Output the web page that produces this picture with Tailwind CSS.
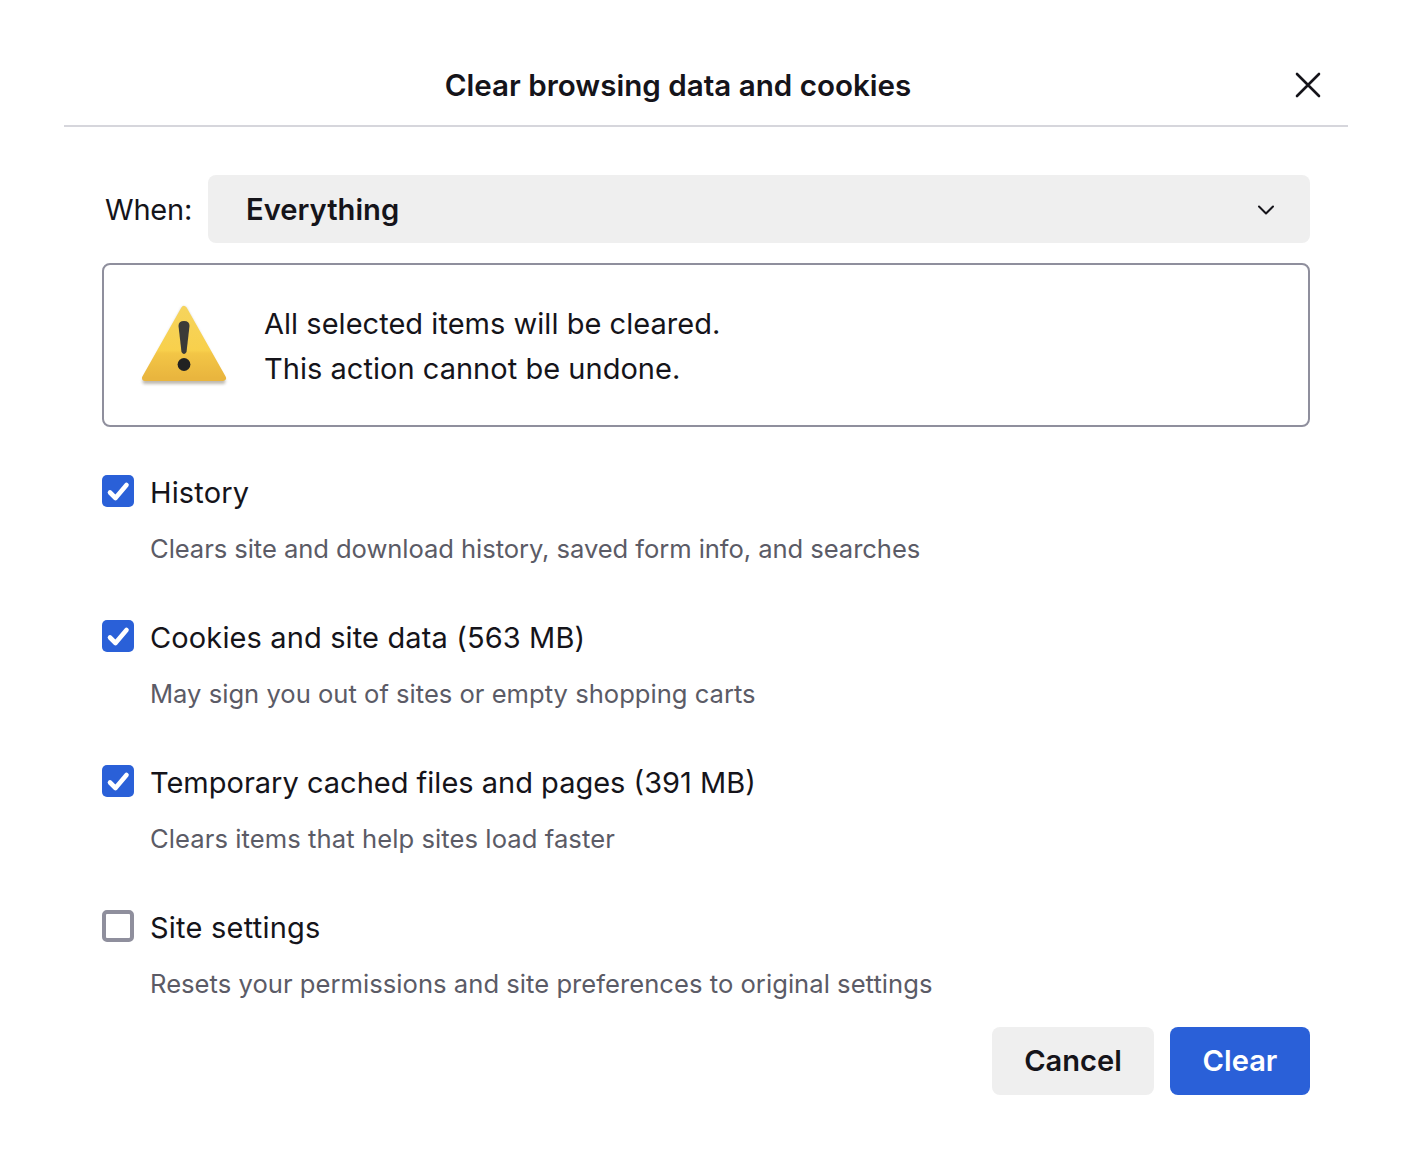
<!DOCTYPE html>
<html><head><meta charset="utf-8">
<script src="https://cdn.jsdelivr.net/npm/@tailwindcss/browser@4"></script>
</head>
<body class="bg-white font-['Inter',sans-serif] text-[#15141a]">
<div class="w-[1412px] h-[1175px] px-[64px] pt-[44px]">
  <header class="relative h-[83px] border-b-2 border-[#d6d6dc] flex items-start justify-center pr-[56px]">
    <h1 class="text-[29.6px] leading-[82px] h-[82px] font-semibold">Clear browsing data and cookies</h1>
    <svg class="absolute left-[1230px] top-[27px] w-[28px] h-[28px]" viewBox="0 0 28 28" fill="none" stroke="#15141a" stroke-width="2.6" stroke-linecap="round"><path d="M3 3 25 25M25 3 3 25"/></svg>
  </header>
  <main class="pl-[38px] pr-[38px]">
    <div class="flex items-center mt-[48px] h-[68px]">
      <span class="w-[106px] pl-[3px] pt-[2px] text-[29px] tracking-[-0.2px]">When:</span>
      <div class="flex-1 h-[68px] bg-[#efefef] rounded-[8px] flex items-center justify-between pl-[38px] pr-[35px]">
        <span class="pt-[2px] text-[29.2px] font-semibold">Everything</span>
        <svg class="w-[18px] h-[12px] mt-[2px]" viewBox="0 0 18 12" fill="none" stroke="#15141a" stroke-width="2" stroke-linecap="round" stroke-linejoin="round"><path d="M2 2.5 9 9.500 16 2.5"/></svg>
      </div>
    </div>
    <div class="mt-[20px] h-[164px] border-2 border-[#8f8f9d] rounded-[8px] flex items-center">
      <svg class="ml-[35px] w-[90px] h-[84px] shrink-0" viewBox="0 0 90 84">
        <defs>
          <linearGradient id="g" x1="0" y1="0" x2="0" y2="1"><stop offset="0" stop-color="#f6d45c"/><stop offset="0.6" stop-color="#f8d04c"/><stop offset="0.64" stop-color="#f3c646"/><stop offset="1" stop-color="#e9b53e"/></linearGradient>
          <filter id="b" x="-10%" y="-10%" width="120%" height="130%"><feGaussianBlur stdDeviation="1.4"/></filter>
          <filter id="s" x="-30%" y="-10%" width="160%" height="120%"><feGaussianBlur stdDeviation="0.6"/></filter>
        </defs>
        <path d="M6 77 H84 L45 5Z" fill="#8a8170" opacity=".55" stroke="#8a8170" stroke-width="5" stroke-linejoin="round" filter="url(#b)" transform="translate(0 1.500)"/>
        <path d="M6 75 45 6 84 75Z" fill="url(#g)" stroke="url(#g)" stroke-width="6" stroke-linejoin="round"/>
        <g filter="url(#s)">
          <path d="M39.500 23Q39.500 18 45 18T50.500 23L47.500 49Q45 53 42.500 49Z" fill="#3a3a38"/>
          <circle cx="45" cy="61.500" r="6.400" fill="#222"/>
        </g>
      </svg>
      <div class="ml-[35px] pt-[1px] text-[29px] leading-[45px] tracking-[0.03px]">
        <p>All selected items will be cleared.</p>
        <p>This action cannot be undone.</p>
      </div>
    </div>
    <ul class="mt-[48px] flex flex-col">
      <li class="h-[145px]">
        <div class="flex items-center h-[34px] gap-[16px]">
          <span class="w-[32px] h-[32px] mb-[2px] rounded-[5px] bg-[#2a60d8] flex items-center justify-center"><svg class="w-[24px] h-[24px]" viewBox="0 0 24 24" fill="none" stroke="#fff" stroke-width="4.600" stroke-linecap="round" stroke-linejoin="round"><path d="M4 13.500 9.500 19 20.500 6"/></svg></span>
          <span class="pt-[1px] text-[29px] tracking-[0.14px]">History</span>
        </div>
        <p class="ml-[48px] mt-[22px] text-[25.6px] leading-[36px] text-[#5b5b66] tracking-[-0.07px]">Clears site and download history, saved form info, and searches</p>
      </li>
      <li class="h-[145px]">
        <div class="flex items-center h-[34px] gap-[16px]">
          <span class="w-[32px] h-[32px] mb-[2px] rounded-[5px] bg-[#2a60d8] flex items-center justify-center"><svg class="w-[24px] h-[24px]" viewBox="0 0 24 24" fill="none" stroke="#fff" stroke-width="4.600" stroke-linecap="round" stroke-linejoin="round"><path d="M4 13.500 9.500 19 20.500 6"/></svg></span>
          <span class="pt-[1px] text-[29px] tracking-[0.13px]">Cookies and site data (563 MB)</span>
        </div>
        <p class="ml-[48px] mt-[22px] text-[25.6px] leading-[36px] text-[#5b5b66]">May sign you out of sites or empty shopping carts</p>
      </li>
      <li class="h-[145px]">
        <div class="flex items-center h-[34px] gap-[16px]">
          <span class="w-[32px] h-[32px] mb-[2px] rounded-[5px] bg-[#2a60d8] flex items-center justify-center"><svg class="w-[24px] h-[24px]" viewBox="0 0 24 24" fill="none" stroke="#fff" stroke-width="4.600" stroke-linecap="round" stroke-linejoin="round"><path d="M4 13.500 9.500 19 20.500 6"/></svg></span>
          <span class="pt-[1px] text-[29px]">Temporary cached files and pages (391 MB)</span>
        </div>
        <p class="ml-[48px] mt-[22px] text-[25.6px] leading-[36px] text-[#5b5b66] tracking-[0.075px]">Clears items that help sites load faster</p>
      </li>
      <li class="h-[117px]">
        <div class="flex items-center h-[34px] gap-[16px]">
          <span class="w-[32px] h-[32px] mb-[2px] rounded-[5px] border-[4px] border-[#8f8f9d] bg-white"></span>
          <span class="pt-[1px] text-[29px] tracking-[0.23px]">Site settings</span>
        </div>
        <p class="ml-[48px] mt-[22px] text-[25.6px] leading-[36px] text-[#5b5b66] tracking-[0.03px]">Resets your permissions and site preferences to original settings</p>
      </li>
    </ul>
    <div class="flex justify-end gap-[16px]">
      <button class="w-[162px] h-[68px] rounded-[8px] bg-[#efefef] text-[29.100px] font-semibold">Cancel</button>
      <button class="w-[140px] h-[68px] rounded-[8px] bg-[#2a60d8] text-white text-[29.100px] font-semibold">Clear</button>
    </div>
  </main>
</div>
</body></html>
